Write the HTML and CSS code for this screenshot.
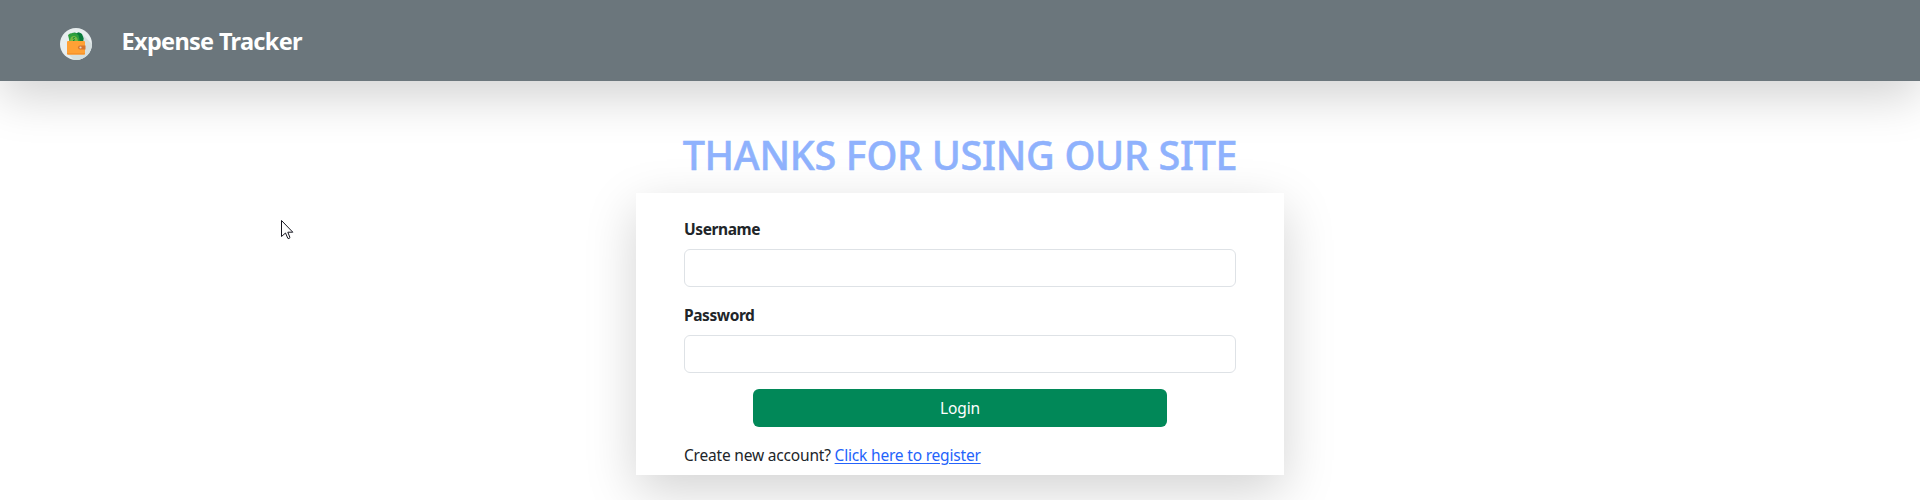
FILE: index.html
```html
<!DOCTYPE html>
<html lang="en">
<head>
<meta charset="utf-8">
<title>Expense Tracker</title>
<link rel="stylesheet" href="styles.css">
</head>
<body>
<header class="navbar">
  <svg class="logo" viewBox="0 0 32 32" width="32" height="32">
    <defs><clipPath id="disc"><circle cx="16" cy="16" r="16"/></clipPath></defs>
    <g clip-path="url(#disc)">
      <rect width="32" height="32" fill="#e8eeef"/>
      <path d="M23 7 32 16V32H14L8 26Z" fill="#d5dfdf"/>
      <path d="m12 5 3-.5 1.500.8 2-1 2 .8 1.500 1 1 2.500.7 2-.7 4H14Z" fill="#087c3b"/>
      <path d="m8 7 2-1.500L13 5l3 .2 2.500 2L20 14H9.500L9 11Z" fill="#2e9e3d"/>
      <path d="M10 14c0-4 1-6 3.500-6s4.500 2 4.500 6Z" fill="#78b943"/>
      <path d="M14.800 9.500c-1.800-.5-2.300 1-1 1.500 1.300.6.900 2-.8 1.500" fill="none" stroke="#17893a"/>
      <rect x="7" y="13" width="18" height="13.500" rx="1" fill="#ffa135"/>
      <path d="M7 25h18v.7a.8.8 0 0 1-.8.8H7.800a.8.800 0 0 1-.8-.8Z" fill="#f7932c"/>
      <path d="M20 17.500h5.500v4H20a2 2 0 0 1 0-4Z" fill="#d67630"/>
      <circle cx="20.500" cy="19.500" r="1.100" fill="#e8d5c0"/>
    </g>
  </svg>
  <span class="brand">Expense Tracker</span>
</header>
<main class="page">
  <h1 class="heading">THANKS FOR USING OUR SITE</h1>
  <form class="card">
    <label class="label label-user" for="username">Username</label>
    <input class="field" id="username" type="text">
    <label class="label label-pass" for="password">Password</label>
    <input class="field" id="password" type="password">
    <button class="submit" type="button">Login</button>
    <p class="note"><span class="question">Create new account?</span> <a class="link" href="#">Click here to register</a></p>
  </form>
</main>
<svg class="cursor" viewBox="0 0 13 20" width="13" height="20">
  <path d="M.5.5V16.500L4.500 13 6.800 18.300q1.200.8 2.200-.7L6.800 12.200H11.800Z" fill="#fff" stroke="#15151f"/>
</svg>
</body>
</html>
```
FILE: styles.css
```css
* { box-sizing: border-box; }
body {
  margin: 0;
  height: 500px;
  overflow: hidden;
  background: #fff;
  color: #212529;
  font: 16px/24px "Noto Sans", sans-serif;
}
.navbar {
  display: flex;
  align-items: flex-start;
  height: 81px;
  padding: 28px 60px 0;
  gap: 29.500px;
  background: #6b767c;
  box-shadow: 0 16px 48px rgba(0, 0, 0, .175);
}
.logo { display: block; }
.brand {
  margin-top: -5px;
  color: #fff;
  font-size: 23.500px;
  line-height: 36px;
  font-weight: 700;
  letter-spacing: -.68px;
}
.page {
  display: flex;
  flex-direction: column;
  align-items: center;
  padding-top: 50px;
}
.heading {
  margin: 0 0 14px;
  color: #8fb2fd;
  font-size: 39.500px;
  line-height: 48px;
  font-weight: 500;
  letter-spacing: -.3px;
  -webkit-text-stroke: .5px #8fb2fd;
  white-space: nowrap;
}
.card {
  display: flex;
  flex-direction: column;
  width: 648px;
  height: 282px;
  padding: 24px 48px 0;
  background: #fff;
  box-shadow: 0 16px 48px rgba(0, 0, 0, .175);
}
.label {
  margin-bottom: 8px;
  font-size: 15.500px;
  font-weight: 700;
  letter-spacing: -.42px;
}
.label-pass { margin-top: 16px; }
.field {
  height: 38px;
  border: 1px solid #dee2e6;
  border-radius: 6px;
  background: #fff;
  padding: 6px 12px;
}
.submit {
  align-self: center;
  width: 414px;
  height: 38px;
  margin-top: 16px;
  border: 0;
  border-radius: 6px;
  background: #018858;
  color: #fff;
  font: 15.500px/24px "Noto Sans", sans-serif;
  letter-spacing: -.15px;
}
.note {
  margin: 16px 0 0;
  font-size: 15.500px;
  letter-spacing: -.19px;
  white-space: nowrap;
}
.link { color: #2463fb; text-underline-offset: 2px; }
.cursor {
  position: absolute;
  left: 281px;
  top: 220px;
}
```
